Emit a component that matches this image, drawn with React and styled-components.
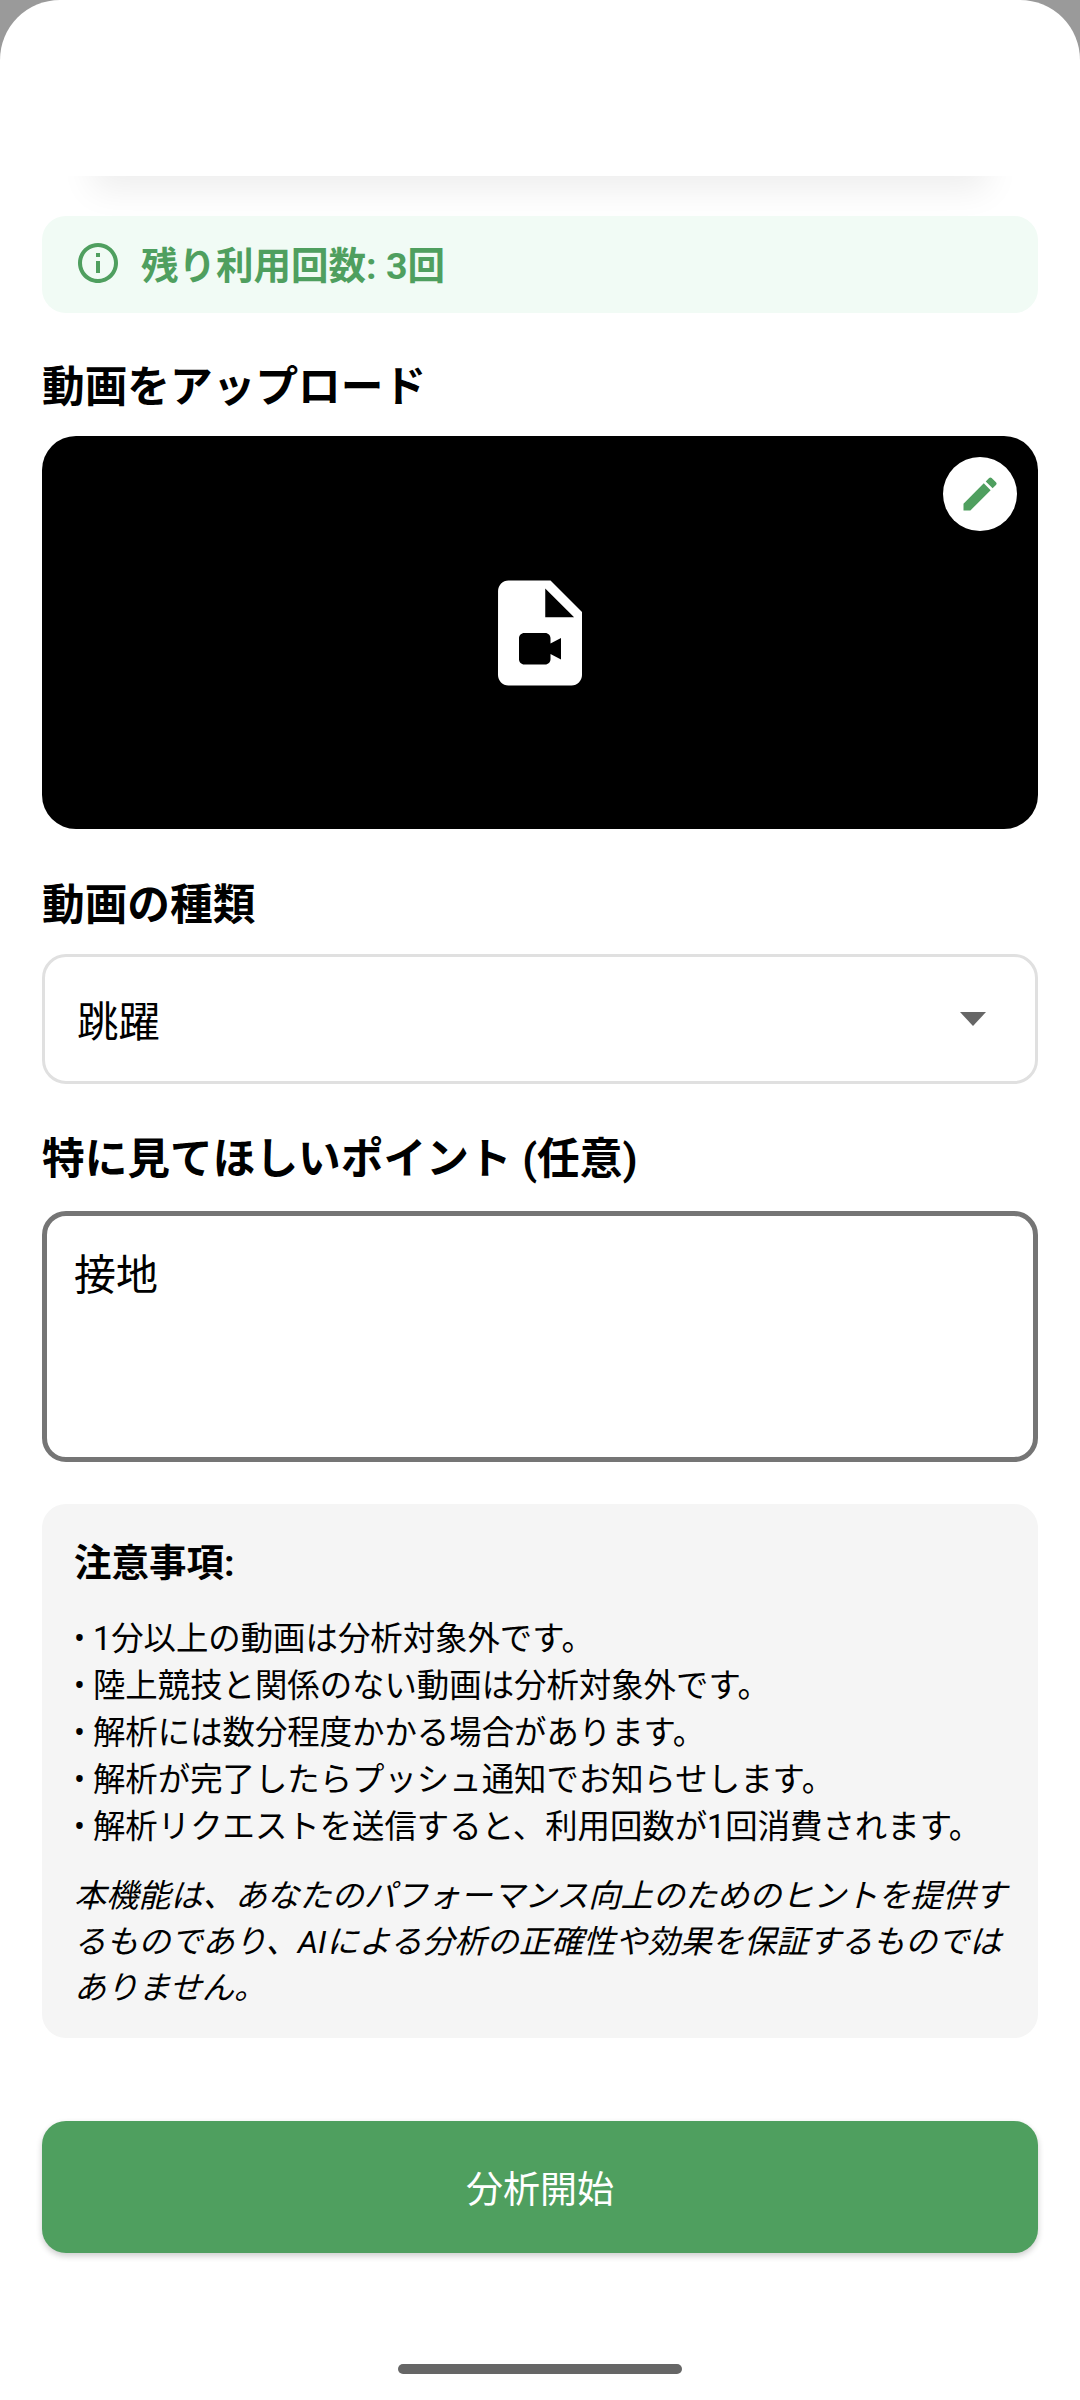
import styled, { createGlobalStyle } from "styled-components";

const GlobalStyle = createGlobalStyle`
  html, body {
    margin: 0;
    padding: 0;
    background: #9a9a9a;
  }
  * {
    box-sizing: border-box;
  }
`;

const green = "#4f9f5f";

const Sheet = styled.div`
  width: 1080px;
  height: 2400px;
  background: #fff;
  border-radius: 60px 60px 0 0;
  overflow: hidden;
  display: flex;
  flex-direction: column;
  font-family: Roboto, "Noto Sans CJK JP", sans-serif;
  color: #000;
`;

const Header = styled.div`
  position: relative;
  height: 176px;
  flex-shrink: 0;

  /* soft shadow only below the header, narrower than the page */
  &::after {
    content: "";
    position: absolute;
    left: 92px;
    right: 92px;
    bottom: 0;
    height: 60px;
    background: #fff;
    box-shadow: 0 14px 34px rgba(0, 0, 0, 0.07);
    clip-path: inset(60px -70px -70px -70px);
  }
`;

const Content = styled.div`
  flex: 1;
  padding: 40px 42px 0;
  display: flex;
  flex-direction: column;
`;

const Banner = styled.div`
  height: 97px;
  flex-shrink: 0;
  display: flex;
  align-items: center;
  gap: 19px;
  padding: 0 0 4px 32px;
  background: #f1fbf5;
  border-radius: 24px;
  color: ${green};
  font-size: 37.5px;
  font-weight: 700;
`;

const Label = styled.div`
  height: 50px;
  line-height: 50px;
  font-size: 42.7px;
  font-weight: 700;
  white-space: nowrap;
  margin-top: ${(props) => props.$top}px;
  margin-bottom: ${(props) => props.$bottom}px;
`;

const VideoBox = styled.div`
  position: relative;
  height: 393px;
  flex-shrink: 0;
  background: #000;
  border-radius: 34px;
  display: flex;
  align-items: center;
  justify-content: center;
`;

const EditButton = styled.div`
  position: absolute;
  top: 21px;
  right: 21px;
  width: 74px;
  height: 74px;
  border-radius: 50%;
  background: #fff;
  display: flex;
  align-items: center;
  justify-content: center;
`;

const Select = styled.div`
  height: 130px;
  flex-shrink: 0;
  border: 3px solid #e0e0e0;
  border-radius: 24px;
  padding: 0 49px 0 32px;
  display: flex;
  align-items: center;
  justify-content: space-between;
  font-size: 41.5px;
`;

const Arrow = styled.div`
  width: 0;
  height: 0;
  border-left: 13px solid transparent;
  border-right: 13px solid transparent;
  border-top: 14px solid #666;
`;

const TextArea = styled.div`
  height: 251px;
  flex-shrink: 0;
  border: 5px solid #757575;
  border-radius: 24px;
  padding: 33px 27px;
  font-size: 42px;
  line-height: 54px;
`;

const Notice = styled.div`
  margin-top: 42px;
  height: 534px;
  flex-shrink: 0;
  background: #f5f5f5;
  border-radius: 24px;
  padding: 35px 24px 0 32px;
`;

const NoticeTitle = styled.div`
  font-size: 37.5px;
  font-weight: 700;
  line-height: 48px;
  margin-bottom: 29px;
`;

const NoticeList = styled.div`
  font-size: 32.4px;
  line-height: 47px;
  white-space: nowrap;
`;

const NoticeNote = styled.div`
  margin-top: 22px;
  font-size: 32.2px;
  line-height: 46px;
  font-style: italic;
`;

const StartButton = styled.div`
  margin-top: 83px;
  height: 132px;
  flex-shrink: 0;
  background: ${green};
  border-radius: 24px;
  color: #fff;
  font-size: 37px;
  display: flex;
  align-items: center;
  justify-content: center;
  box-shadow: 0 3px 6px rgba(0, 0, 0, 0.2);
`;

const HomeBar = styled.div`
  margin: 111px auto 0;
  width: 284px;
  height: 10px;
  flex-shrink: 0;
  border-radius: 5px;
  background: #666;
`;

const InfoIcon = () => (
  <svg width="48" height="48" viewBox="0 0 24 24" fill={green}>
    <path d="M11 7h2v2h-2zm0 4h2v6h-2zm1-9C6.48 2 2 6.48 2 12s4.48 10 10 10 10-4.48 10-10S17.52 2 12 2zm0 18c-4.41 0-8-3.59-8-8s3.59-8 8-8 8 3.59 8 8-3.59 8-8 8z" />
  </svg>
);

const EditIcon = () => (
  <svg width="44" height="44" viewBox="0 0 24 24" fill={green}>
    <path d="M3 17.25V21h3.75L17.81 9.94l-3.75-3.75L3 17.25zM20.71 7.04a1 1 0 0 0 0-1.41l-2.34-2.34a1 1 0 0 0-1.41 0l-1.83 1.83 3.75 3.75 1.83-1.83z" />
  </svg>
);

const VideoFileIcon = () => (
  <svg width="126" height="126" viewBox="0 0 24 24" fill="#fff">
    <path d="M14 2H6c-1.1 0-1.99.9-1.99 2L4 20c0 1.1.89 2 1.99 2H18c1.1 0 2-.9 2-2V8l-6-6zm-1 7V3.5L18.5 9H13zm1 5 2-1.06v4.12L14 16v1c0 .55-.45 1-1 1H9c-.55 0-1-.45-1-1v-4c0-.55.45-1 1-1h4c.55 0 1 .45 1 1v1z" />
  </svg>
);

const notes = [
  "• 1分以上の動画は分析対象外です。",
  "• 陸上競技と関係のない動画は分析対象外です。",
  "• 解析には数分程度かかる場合があります。",
  "• 解析が完了したらプッシュ通知でお知らせします。",
  "• 解析リクエストを送信すると、利用回数が1回消費されます。",
];

const App = () => {
  return (
    <>
      <GlobalStyle />
      <Sheet>
        <Header />
        <Content>
          <Banner>
            <InfoIcon />
            残り利用回数: 3回
          </Banner>

          <Label $top={49} $bottom={24}>動画をアップロード</Label>
          <VideoBox>
            <VideoFileIcon />
            <EditButton>
              <EditIcon />
            </EditButton>
          </VideoBox>

          <Label $top={51} $bottom={24}>動画の種類</Label>
          <Select>
            跳躍
            <Arrow />
          </Select>

          <Label $top={50} $bottom={27}>特に見てほしいポイント (任意)</Label>
          <TextArea>接地</TextArea>

          <Notice>
            <NoticeTitle>注意事項:</NoticeTitle>
            <NoticeList>
              {notes.map((n) => (
                <div key={n}>{n}</div>
              ))}
            </NoticeList>
            <NoticeNote>
              本機能は、あなたのパフォーマンス向上のためのヒントを提供するものであり、AIによる分析の正確性や効果を保証するものではありません。
            </NoticeNote>
          </Notice>

          <StartButton>分析開始</StartButton>
          <HomeBar />
        </Content>
      </Sheet>
    </>
  );
};

export default App;
